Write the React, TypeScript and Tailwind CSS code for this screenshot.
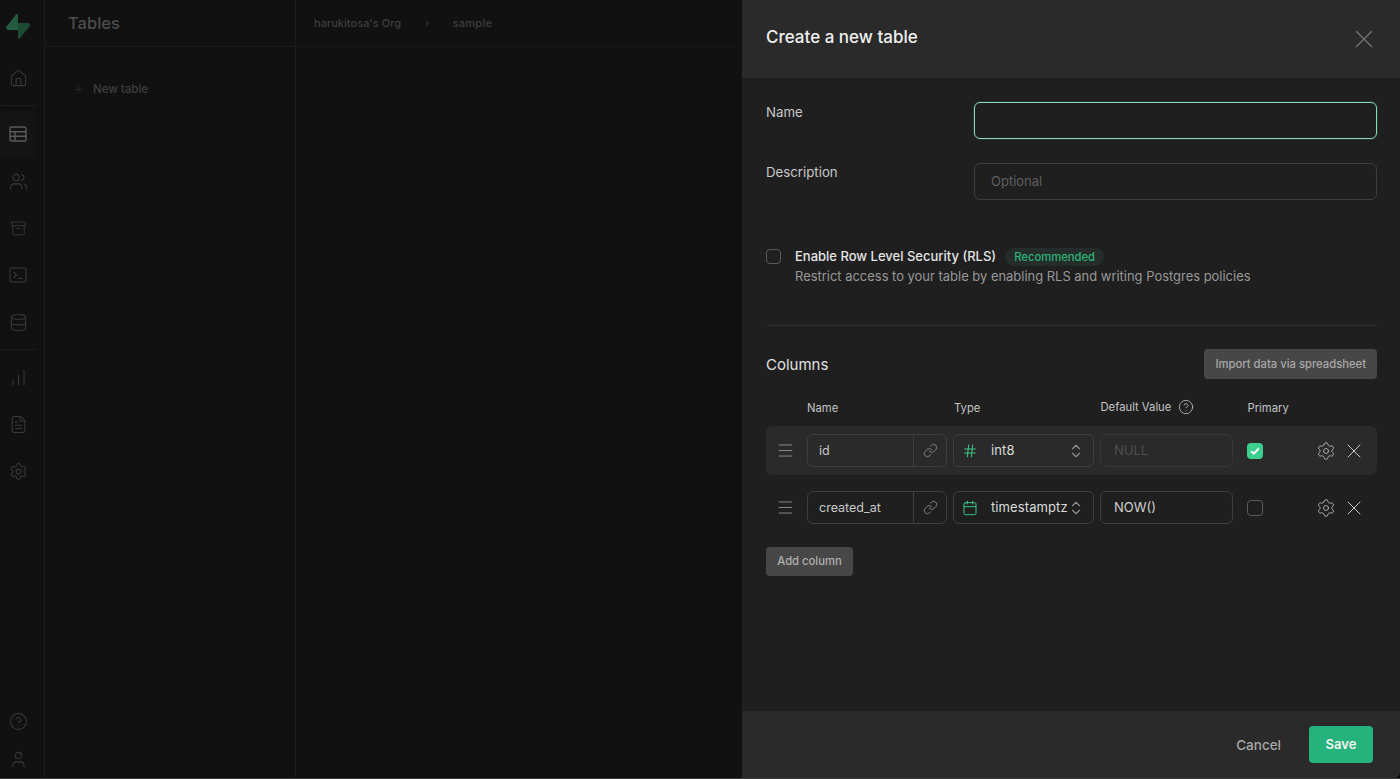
import { Archive, Calendar, ChartNoAxesColumnIncreasing, ChevronDown, ChevronUp, CircleHelp, Database, FileText, Hash, Home, Link, Menu, Plus, Settings, User, Users, X } from "lucide-react"

const font = { fontFamily: "Inter, 'Noto Sans', sans-serif" }

function SupabaseLogo() {
    return (
        <svg width="24" height="25" viewBox="0 0 109 113" fill="none">
            <path d="M63.7076 110.284C60.8481 113.885 55.0502 111.912 54.9813 107.314L53.9738 40.0627L99.1935 40.0627C107.384 40.0627 111.952 49.5228 106.859 55.9374L63.7076 110.284Z" fill="#1c4a35" />
            <path d="M45.317 2.07103C48.1765 -1.53037 53.9745 0.442937 54.0434 5.04075L54.4849 72.2922H9.83113C1.64038 72.2922 -2.92775 62.8321 2.1655 56.4175L45.317 2.07103Z" fill="#235a40" />
        </svg>
    )
}

function TableIcon({ size, className }: { size: number; strokeWidth?: number; className?: string }) {
    return (
        <svg width={size} height={size} viewBox="0 0 19 19" fill="none" stroke="currentColor" strokeWidth="1.4" className={className}>
            <rect x="1" y="2" width="16" height="14" rx="1.5" />
            <path d="M1 6.8h16M1 11.2h16M6 6.8V16" />
        </svg>
    )
}

function TerminalIcon({ size, className }: { size: number; strokeWidth?: number; className?: string }) {
    return (
        <svg width={size} height={size} viewBox="0 0 19 19" fill="none" stroke="currentColor" strokeWidth="1.1" className={className}>
            <rect x="1" y="2" width="16" height="14" rx="1.5" />
            <path d="M4.5 6l3 3-3 3M9 12.5h4" />
        </svg>
    )
}

function RailIcon({ icon: Icon, active, size = 19, tall = 47 }: { icon: typeof Home | typeof TableIcon; active?: boolean; size?: number; tall?: 47 | 38 }) {
    return (
        <div className={`flex w-[36px] items-center justify-center rounded ${tall === 47 ? "h-[47px]" : "h-[38px]"} ${active ? "bg-[#141414]" : ""}`}>
            <Icon size={size} strokeWidth={1.3} className={active ? "text-[#5a5a5a]" : "text-[#3a3a3a]"} />
        </div>
    )
}

function Sidebar() {
    return (
        <div className="flex h-full w-[45px] shrink-0 flex-col border-r border-[#1c1c1c]">
            <div className="flex h-[54px] items-end justify-center pb-[15px] pr-[8px]">
                <SupabaseLogo />
            </div>
            <div className="flex flex-col pt-[1px]">
                <RailIcon icon={Home} />
            </div>
            <div className="mt-[3px] h-px w-[36px] bg-[#1c1c1c]" />
            <div className="mt-[5px] flex flex-col">
                <RailIcon icon={TableIcon} active />
                <RailIcon icon={Users} />
                <RailIcon icon={Archive} size={17} />
                <RailIcon icon={TerminalIcon} />
                <RailIcon icon={Database} />
            </div>
            <div className="mt-[3px] h-px w-[36px] bg-[#1c1c1c]" />
            <div className="mt-[4px] flex flex-col">
                <RailIcon icon={ChartNoAxesColumnIncreasing} />
                <RailIcon icon={FileText} />
                <RailIcon icon={Settings} />
            </div>
            <div className="mt-auto flex flex-col">
                <RailIcon icon={CircleHelp} tall={38} />
                <RailIcon icon={User} tall={38} />
            </div>
        </div>
    )
}

function Background() {
    return (
        <div className="flex h-full w-[742px] shrink-0 bg-[#111111]">
            <Sidebar />
            <div className="flex h-full w-[251px] shrink-0 flex-col border-r border-[#1c1c1c]">
                <div className="flex h-[47px] items-center border-b border-[#1c1c1c] pl-[23px] pt-[1px] text-[16.5px] font-medium text-[#4d4d4d]">
                    Tables
                </div>
                <div className="flex items-center gap-[9px] pl-[28px] pt-[34px] text-[11.5px] font-medium text-[#3f3f3f]">
                    <Plus size={11} strokeWidth={1.2} className="text-[#383838]" />
                    New table
                </div>
            </div>
            <div className="flex-1">
                <div className="flex h-[47px] items-center border-b border-[#161616] pl-[18px] text-[11px] font-medium text-[#3f3f3f]">
                    <span className="tracking-[0.03px]">harukitosa's Org</span>
                    <span className="ml-[24px] text-[#333333]">›</span>
                    <span className="ml-[23px] tracking-[0.3px]">sample</span>
                </div>
            </div>
        </div>
    )
}

function Field({ label, placeholder, focused }: { label: string; placeholder?: string; focused?: boolean }) {
    return (
        <div className="flex">
            <div className={`w-[208px] text-[13.25px] leading-[19px] text-[#c8c8c8] ${focused ? "pt-[1px]" : ""}`}>{label}</div>
            <div className={`flex h-[37px] flex-1 items-center rounded-md border px-4 text-[13px] text-[#5e5e5e] ${focused ? "border-[#8ad9b5] shadow-[0_0_0_1px_#26392f]" : "border-[#3e3e3e]"}`}>
                {placeholder}
            </div>
        </div>
    )
}

function ColumnRow({ name, type, typeIcon, def, primary }: { name: string; type: string; typeIcon: typeof Hash; def: string; primary?: boolean }) {
    const TypeIcon = typeIcon
    return (
        <div className={`flex h-[49px] items-center rounded-md pl-[10px] ${primary ? "bg-[#2a2a2a]" : ""}`}>
            <Menu size={19} strokeWidth={0.9} className="mr-[12px] text-[#b0b0b0]" />
            <div className="flex h-[33px] w-[140px] rounded-md border border-[#3e3e3e] text-[12.5px] text-[#c8c8c8]">
                <div className="flex w-[106px] items-center border-r border-[#3e3e3e] pl-[11px] pt-[1px]">{name}</div>
                <div className="flex flex-1 items-center justify-center">
                    <Link size={15} strokeWidth={1.1} className="text-[#a8a8a8]" />
                </div>
            </div>
            <div className="ml-[6px] flex h-[33px] w-[141px] items-center rounded-md border border-[#3e3e3e] pl-[8px] text-[13px] text-[#dcdcdc]">
                <TypeIcon size={16} strokeWidth={1.4} className="shrink-0 text-[#3ecf8e]" />
                <span className="ml-[13px] flex-1 pt-[1px] tracking-[0.1px]">{type}</span>
                <div className="mr-[10px] flex shrink-0 flex-col text-[#8f8f8f]">
                    <ChevronUp size={14} strokeWidth={2} className="-mb-[3px]" />
                    <ChevronDown size={14} strokeWidth={2} className="-mt-[3px]" />
                </div>
            </div>
            <div className={`ml-[6px] flex h-[33px] w-[133px] items-center rounded-md border pl-[13px] pt-[1px] text-[13px] ${primary ? "border-[#363636] text-[#4e4e4e]" : "border-[#3e3e3e] text-[#d0d0d0]"}`}>
                {def}
            </div>
            <div className={`ml-[14px] flex h-[16px] w-[16px] items-center justify-center rounded-[4px] ${primary ? "bg-[#3ecf8e]" : "border border-[#5a5a5a]"}`}>
                {primary && (
                    <svg width="10" height="8" viewBox="0 0 10 8" fill="none">
                        <path d="M1.2 4.2 3.8 6.6 8.8 1.4" stroke="#ffffff" strokeWidth="1.9" />
                    </svg>
                )}
            </div>
            <Settings size={20} strokeWidth={1} className="ml-[53px] text-[#c0c0c0]" />
            <X size={24} strokeWidth={1} className="ml-[6px] text-[#c8c8c8]" />
        </div>
    )
}

function Panel() {
    return (
        <div className="flex h-full w-[658px] shrink-0 flex-col overflow-hidden rounded-br-[6px] bg-[#1f1f1f]">
            <div className="flex h-[78px] shrink-0 items-center justify-between bg-[#2a2a2a] pl-6 pr-[21px]">
                <div className="pb-[3px] text-[17px] font-medium text-[#f0f0f0]">Create a new table</div>
                <X size={30} strokeWidth={1.2} className="text-[#6e6e6e]" />
            </div>
            <div className="flex flex-1 flex-col pl-6 pr-[23px] pt-6">
                <div className="flex flex-col gap-6">
                    <Field label="Name" focused />
                    <Field label="Description" placeholder="Optional" />
                </div>
                <div className="mt-[47px] flex">
                    <div className="mt-[2px] h-[15px] w-[15px] rounded-[4px] border border-[#5a5a5a]" />
                    <div className="ml-[14px]">
                        <div className="flex h-[20px] items-center">
                            <span className="text-[13px] font-medium text-[#e4e4e4]">Enable Row Level Security (RLS)</span>
                            <span className="ml-[9px] rounded-full bg-[#242d29] px-[9px] py-[1px] text-[11.25px] font-medium text-[#2fb37a]">Recommended</span>
                        </div>
                        <div className="text-[12.95px] leading-[19px] text-[#989898]">Restrict access to your table by enabling RLS and writing Postgres policies</div>
                    </div>
                </div>
                <div className="mt-[39px] h-px bg-[#2e2e2e]" />
                <div className="mt-[23px] flex h-[30px] items-center justify-between">
                    <div className="pt-[3px] text-[15px] text-[#e0e0e0]">Columns</div>
                    <div className="flex h-[30px] items-center rounded bg-[#474747] px-[11px] text-[11.25px] font-medium text-[#a8a8a8]">Import data via spreadsheet</div>
                </div>
                <div className="mt-[16px] flex h-[31px] items-center pb-[4px] text-[11.25px] text-[#c4c4c4]">
                    <span className="ml-[41px] w-[147px]">Name</span>
                    <span className="w-[146.5px]">Type</span>
                    <span className="flex w-[147px] items-center gap-[7px] pb-[3px]">
                        Default Value
                        <CircleHelp size={16} strokeWidth={1.2} className="text-[#c4c4c4]" />
                    </span>
                    <span>Primary</span>
                </div>
                <div className="flex flex-col gap-[8px]">
                    <ColumnRow name="id" type="int8" typeIcon={Hash} def="NULL" primary />
                    <ColumnRow name="created_at" type="timestamptz" typeIcon={Calendar} def="NOW()" />
                </div>
                <div className="mt-[15px] flex h-[29px] w-[87px] items-center justify-center rounded bg-[#474747] text-[11.25px] font-medium text-[#b0b0b0]">Add column</div>
            </div>
            <div className="flex h-[67px] shrink-0 items-center justify-end gap-[28px] bg-[#2a2a2a] pr-[27px]">
                <span className="pt-[1px] text-[13.5px] font-medium text-[#a8a8a8]">Cancel</span>
                <div className="flex h-[37px] w-[64px] items-center justify-center rounded bg-[#26b27c] pt-[1px] text-[13px] font-semibold text-[#f4f4f4]">Save</div>
            </div>
        </div>
    )
}

export default function App() {
    return (
        <div className="flex h-[779px] w-[1400px] flex-col overflow-hidden bg-[#0c0c0c]" style={font}>
            <div className="flex h-[778px]">
                <Background />
                <Panel />
            </div>
            <div className="h-px bg-[#3a3a3a]" />
        </div>
    )
}
